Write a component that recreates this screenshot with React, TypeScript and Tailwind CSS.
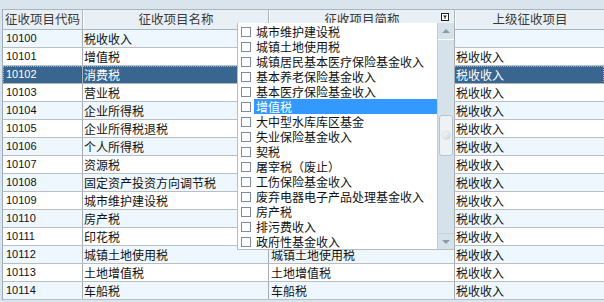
const rows = [
  ["10100", "税收收入", "", ""],
  ["10101", "增值税", "", "税收收入"],
  ["10102", "消费税", "", "税收收入"],
  ["10103", "营业税", "", "税收收入"],
  ["10104", "企业所得税", "", "税收收入"],
  ["10105", "企业所得税退税", "", "税收收入"],
  ["10106", "个人所得税", "", "税收收入"],
  ["10107", "资源税", "", "税收收入"],
  ["10108", "固定资产投资方向调节税", "", "税收收入"],
  ["10109", "城市维护建设税", "", "税收收入"],
  ["10110", "房产税", "", "税收收入"],
  ["10111", "印花税", "", "税收收入"],
  ["10112", "城镇土地使用税", "城镇土地使用税", "税收收入"],
  ["10113", "土地增值税", "土地增值税", "税收收入"],
  ["10114", "车船税", "车船税", "税收收入"],
];

const options = [
  "城市维护建设税",
  "城镇土地使用税",
  "城镇居民基本医疗保险基金收入",
  "基本养老保险基金收入",
  "基本医疗保险基金收入",
  "增值税",
  "大中型水库库区基金",
  "失业保险基金收入",
  "契税",
  "屠宰税（废止）",
  "工伤保险基金收入",
  "废弃电器电子产品处理基金收入",
  "房产税",
  "排污费收入",
  "政府性基金收入",
];

const cjk = "font-['Noto_Sans_CJK_SC',sans-serif]";

const FilterIcon = () => (
  <svg width="8" height="8" viewBox="0 0 8 8" className="block">
    <rect x="0.5" y="0.5" width="7" height="7" fill="#fff" stroke="#222" />
    <path d="M2 2.5h4L4.5 4.3V6h-1V4.3z" fill="#222" />
  </svg>
);

export default function App() {
  return (
    <div className={`relative w-[604px] h-[302px] overflow-hidden bg-[#d9e4ec] pt-[9px] text-[12px] leading-none ${cjk}`}>
      <div className="ml-[2px] border-l border-[#9fadb8]">
        {/* header */}
        <div className="flex h-[21px] border-y border-[#a9b6c0] bg-[#e9f0f5] text-[#3a3a3a]">
          <div className="w-[80px] shrink-0 flex items-center pl-[2px] border-r border-[#a9b6c0] text-[12.5px]">征收项目代码</div>
          <div className="w-[186px] shrink-0 flex items-center justify-center border-r border-[#a9b6c0] border-l border-l-white text-[12.5px]">征收项目名称</div>
          <div className="relative w-[186px] shrink-0 flex items-center justify-center border-r border-[#a9b6c0] border-l border-l-white text-[12.5px]">
            征收项目简称
            <div className="absolute left-[171px] top-[3px]">
              <FilterIcon />
            </div>
          </div>
          <div className="flex-1 flex items-center justify-center border-l border-white text-[12.5px]">上级征收项目</div>
        </div>
        {/* rows */}
        {rows.map((r, i) => {
          const sel = i === 2;
          const bg = sel ? "bg-[#39668f] text-white outline outline-1 outline-dotted outline-[#e8a04c] -outline-offset-1" : i % 2 === 0 ? "bg-[#eef7fd] text-[#111]" : "bg-white text-[#111]";
          return (
            <div key={r[0]} className={`flex h-[18px] border-b border-[#b8bec4] ${bg}`}>
              <div className="w-[80px] shrink-0 flex items-center pl-[3px] border-r border-[#a8aeb4] font-['Liberation_Sans',sans-serif] text-[11px]">{r[0]}</div>
              <div className="w-[186px] shrink-0 flex items-center pl-[1px] border-r border-[#a8aeb4]">{r[1]}</div>
              <div className="w-[186px] shrink-0 flex items-center pl-[2px] border-r border-[#a8aeb4]">{r[2]}</div>
              <div className="flex-1 flex items-center pl-[1px]">{r[3]}</div>
            </div>
          );
        })}
      </div>

      {/* dropdown popup */}
      <div className="absolute left-[237px] top-[23px] w-[217px] h-[227px] flex bg-white border-b border-l border-[#b5bcc2]">
        <div className="flex-1 pt-[1px]">
          {options.map((o, i) => {
            const hi = i === 5;
            return (
              <div key={o} className="flex items-center h-[15px]">
                <div className="w-[10px] h-[10px] ml-[3px] mr-[3px] border border-[#7d8aa6] bg-white shrink-0" />
                <div className={`flex-1 h-full flex items-center pl-[2px] whitespace-nowrap ${hi ? "bg-[#3399ff] text-white" : "text-[#111]"}`}>{o}</div>
              </div>
            );
          })}
        </div>
        {/* scrollbar */}
        <div className="w-[17px] shrink-0 flex flex-col bg-[#d6e2ea] border-l border-[#c3ced6]">
          <div className="h-[17px] flex items-center justify-center border-b border-white">
            <div className="w-0 h-0 border-x-[4px] border-x-transparent border-b-[4px] border-b-[#8e9ca8]" />
          </div>
          <div className="h-[75px]" />
          <div className="h-[41px] mx-[1px] rounded-[3px] border border-[#b7c3cc] bg-[#edf2f5] flex items-center justify-center">
            <div className="w-[9px] h-[9px] rounded-full bg-gradient-to-br from-white to-[#c9d4dc] border border-[#d5dde3]" />
          </div>
          <div className="flex-1" />
          <div className="h-[16px] flex items-center justify-center border-t border-[#c6d1d9]">
            <div className="w-0 h-0 border-x-[4px] border-x-transparent border-t-[4px] border-t-[#8e9ca8]" />
          </div>
        </div>
      </div>
    </div>
  );
}
